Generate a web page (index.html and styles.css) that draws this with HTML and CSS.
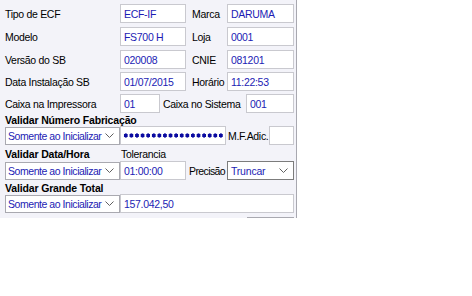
FILE: index.html
```html
<!DOCTYPE html>
<html lang="pt-BR">
<head>
    <meta charset="UTF-8">
    <title>Configuração ECF</title>
    <link rel="stylesheet" href="styles.css">
</head>
<body>
    <div class="panel">
        <div class="row r1">
            <span class="lbl w115">Tipo de ECF</span>
            <span class="field w66">ECF-IF</span>
            <span class="lbl side">Marca</span>
            <span class="field w67">DARUMA</span>
        </div>
        <div class="row">
            <span class="lbl w115">Modelo</span>
            <span class="field w66">FS700 H</span>
            <span class="lbl side">Loja</span>
            <span class="field w67">0001</span>
        </div>
        <div class="row">
            <span class="lbl w115">Versão do SB</span>
            <span class="field w66">020008</span>
            <span class="lbl side">CNIE</span>
            <span class="field w67">081201</span>
        </div>
        <div class="row r4">
            <span class="lbl w115">Data Instalação SB</span>
            <span class="field w66">01/07/2015</span>
            <span class="lbl side">Horário</span>
            <span class="field w67">11:22:53</span>
        </div>
        <div class="row r4">
            <span class="lbl w115">Caixa na Impressora</span>
            <span class="field w40">01</span>
            <span class="lbl caixa">Caixa no Sistema</span>
            <span class="field w48">001</span>
        </div>

        <div class="head h1">Validar Número Fabricação</div>
        <div class="row r0">
            <span class="combo"><span>Somente ao Inicializar</span><svg width="9" height="6" viewBox="0 0 9 6"><path d="M0.5 0.5 L4.5 4.5 L8.5 0.5" fill="none" stroke="#606060"/></svg></span>
            <span class="field pass"><span class="dots"></span></span>
            <span class="lbl mf">M.F.Adic.</span>
            <span class="field w25"></span>
        </div>

        <div class="head-row">
            <span class="head w116">Validar Data/Hora</span>
            <span class="lbl">Tolerancia</span>
        </div>
        <div class="row r0">
            <span class="combo"><span>Somente ao Inicializar</span><svg width="9" height="6" viewBox="0 0 9 6"><path d="M0.5 0.5 L4.5 4.5 L8.5 0.5" fill="none" stroke="#606060"/></svg></span>
            <span class="field w66">01:00:00</span>
            <span class="lbl prec">Precisão</span>
            <span class="combo dark"><span>Truncar</span><svg width="9" height="6" viewBox="0 0 9 6"><path d="M0.5 0.5 L4.5 4.5 L8.5 0.5" fill="none" stroke="#606060"/></svg></span>
        </div>

        <div class="head h3">Validar Grande Total</div>
        <div class="row r0">
            <span class="combo"><span>Somente ao Inicializar</span><svg width="9" height="6" viewBox="0 0 9 6"><path d="M0.5 0.5 L4.5 4.5 L8.5 0.5" fill="none" stroke="#606060"/></svg></span>
            <span class="field w174">157.042,50</span>
        </div>
        <div class="bottom">
            <span class="btn-edge"></span>
        </div>
    </div>
</body>
</html>
```

FILE: styles.css
```css
* {
    margin: 0;
    padding: 0;
    box-sizing: border-box;
}
body {
    background: #ffffff;
    font-family: "Liberation Sans", Arial, sans-serif;
    font-size: 10.5px;
    letter-spacing: -0.3px;
    color: #000000;
}
.panel {
    width: 297px;
    height: 218px;
    background: #f3f3f9;
    border-right: 1px solid #a8a8b0;
    padding-left: 5px;
    overflow: hidden;
}
.row {
    display: flex;
    align-items: center;
    height: 19px;
    margin-top: 4px;
}
.row.r4 {
    margin-top: 3px;
}
.row.r0 {
    margin-top: 0;
}
.lbl {
    white-space: nowrap;
}
.w115 { width: 115px; }
.w116 { width: 116px; }
.side {
    width: 41px;
    padding-left: 6px;
}
.caixa {
    width: 86px;
    padding-left: 3px;
}
.mf {
    width: 43px;
    padding-left: 2px;
}
.prec {
    width: 41px;
    padding-left: 3px;
    letter-spacing: -0.6px;
}
.field {
    display: flex;
    align-items: center;
    height: 19px;
    background: #ffffff;
    border: 1px solid #c9c9cf;
    padding-left: 3px;
    color: #1c1cb4;
    white-space: nowrap;
}
.w66 { width: 66px; }
.w67 { width: 67px; }
.w40 { width: 40px; }
.w48 { width: 48px; }
.w25 { width: 25px; }
.w174 { width: 174px; }
.pass {
    width: 106px;
    padding-left: 2px;
}
.dots {
    display: block;
    width: 101px;
    height: 5px;
    background-image: radial-gradient(circle, #0a0aa0 1.9px, transparent 2.3px);
    background-size: 5.6px 5px;
}
.combo {
    display: flex;
    align-items: center;
    justify-content: space-between;
    width: 115px;
    height: 18px;
    background: #ffffff;
    border: 1px solid #a9a9b0;
    padding: 0 5px 0 2px;
    color: #1c1cb4;
    white-space: nowrap;
    letter-spacing: -0.45px;
}
.combo.dark {
    border-color: #7c7c7c;
    height: 19px;
    width: 67px;
    padding-left: 3px;
    letter-spacing: -0.2px;
}
.head {
    font-weight: bold;
    font-size: 10.5px;
    letter-spacing: -0.15px;
    white-space: nowrap;
}
.h1 {
    height: 13px;
    line-height: 14px;
}
.head-row {
    display: flex;
    align-items: center;
    height: 16px;
    padding-top: 2px;
}
.h3 {
    height: 13px;
    line-height: 14px;
    margin-top: 1px;
}
.bottom {
    display: flex;
    justify-content: flex-end;
    padding-right: 2px;
    margin-top: 4px;
}
.btn-edge {
    width: 47px;
    height: 6px;
    border: 1px solid #a9a9b0;
    border-bottom: none;
    background: #f8f8fb;
}
```
